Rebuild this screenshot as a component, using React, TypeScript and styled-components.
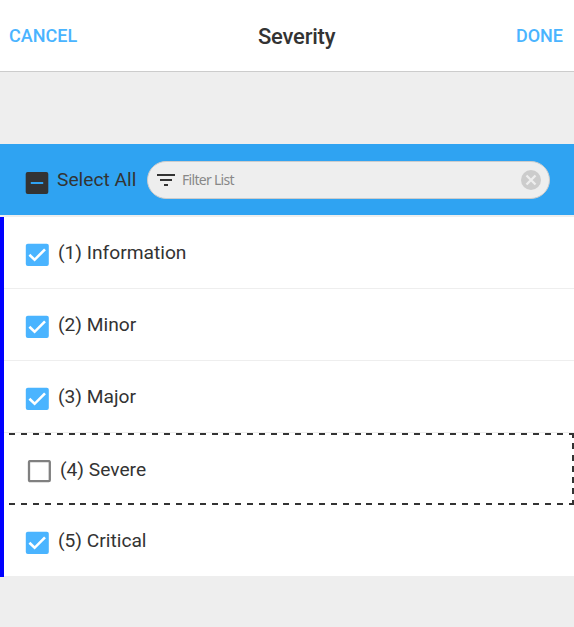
import React from "react";
import styled, { createGlobalStyle } from "styled-components";

const GlobalStyle = createGlobalStyle`
  * { box-sizing: border-box; }
  body { margin: 0; background: #eeeeee; font-family: Roboto, "Liberation Sans", sans-serif; color: #333333; }
`;

const Page = styled.main`
  height: 627px;
  overflow: hidden;
`;

const TopBar = styled.header`
  display: grid;
  grid-template-columns: 249px 1fr auto;
  align-items: center;
  height: 72px;
  padding: 0 11px 0 9px;
  background: #ffffff;
  border-bottom: 1px solid #cccccc;
`;

const TextButton = styled.button`
  justify-self: start;
  padding: 0;
  border: 0;
  background: none;
  color: #4ab4ff;
  font: 500 18px/24px Roboto, sans-serif;
`;

const Title = styled.h1`
  margin: 0;
  padding-top: 2px;
  font-size: 22px;
  line-height: 28px;
  font-weight: 500;
  letter-spacing: -0.22px;
`;

const SelectBar = styled.section`
  display: flex;
  align-items: center;
  height: 71px;
  margin: 72px 0 2px;
  padding: 0 24px 0 25px;
  background: #2fa3f2;
`;

const Label = styled.span`
  font-size: 19.2px;
  line-height: 24px;
  white-space: nowrap;
`;

const SelectAll = styled.label`
  display: flex;
  gap: 8px;
  width: 122px;
  height: 31px;
  padding-top: 4px;
  svg { margin-top: 4px; flex: none; }
`;

const SearchField = styled.div`
  display: flex;
  align-items: center;
  flex: 1;
  height: 38px;
  padding: 0 8px 0 9px;
  border: 1px solid #cccccc;
  border-radius: 19px;
  background: #eeeeee;
`;

const SearchInput = styled.input`
  flex: 1;
  min-width: 0;
  margin-left: 7px;
  padding: 0;
  border: 0;
  outline: 0;
  background: transparent;
  font: 14px/20px "Noto Sans", sans-serif;
  letter-spacing: -0.7px;
  &::placeholder { color: #888888; opacity: 1; }
`;

const List = styled.ul`
  margin: 0;
  padding: 0;
  list-style: none;
  border-left: 4px solid #0000ff;
`;

const dashX = "repeating-linear-gradient(90deg, #333333 0 6px, transparent 6px 11.915px)";
const dashY = "repeating-linear-gradient(180deg, #333333 0 6px, transparent 6px 11.3px)";

const Row = styled.li<{ $focused: boolean }>`
  display: flex;
  gap: 9px;
  height: 72px;
  padding: ${(p) => (p.$focused ? "25px 0 0 23px" : "24px 0 0 21px")};
  background: ${(p) =>
    p.$focused
      ? `${dashX} 5px 0 / 565px 2px no-repeat, ${dashX} 5px 70px / 565px 2px no-repeat, ${dashY} right -1px / 2px 73px no-repeat, #ffffff`
      : "#ffffff"};
  border-bottom: ${(p) => (p.$focused ? "0" : "1px solid #eeeeee")};
  svg { margin-top: 2px; flex: none; }
`;

const CheckIcon = ({ state }: { state: "on" | "off" | "mixed" }) => (
  <svg width="24" height="24" viewBox="0 0 24 24" fill="none">
    {state === "on" && (
      <>
        <rect x="0.8" y="0.8" width="23" height="22.2" rx="2" fill="#4ab4ff" />
        <path d="M4.4 11.8 9.6 16.8 20 6.3" stroke="#ffffff" strokeWidth="2.6" />
      </>
    )}
    {state === "off" && (
      <rect x="2" y="1.1" width="20.8" height="20.1" rx="1" stroke="#808080" strokeWidth="2.3" />
    )}
    {state === "mixed" && (
      <>
        <rect x="0.7" y="0" width="22.6" height="22" rx="2" fill="#333333" />
        <path d="M5.8 11h12.4" stroke="#2fa3f2" strokeWidth="2" />
      </>
    )}
  </svg>
);

const FilterIcon = () => (
  <svg width="18" height="12" viewBox="0 0 18 12" fill="#333333">
    <path d="M0 0h18v2H0zM3 5h12v2H3zM7 10h4v2H7z" />
  </svg>
);

const ClearIcon = () => (
  <svg width="20" height="20" viewBox="0 0 20 20">
    <circle cx="10" cy="10" r="10" fill="#cccccc" />
    <path d="m5.5 5.5 9 9m0-9-9 9" stroke="#eeeeee" strokeWidth="2.3" />
  </svg>
);

const severities = [
  { label: "(1) Information", checked: true, focused: false },
  { label: "(2) Minor", checked: true, focused: false },
  { label: "(3) Major", checked: true, focused: false },
  { label: "(4) Severe", checked: false, focused: true },
  { label: "(5) Critical", checked: true, focused: false },
];

export default function App() {
  return (
    <Page>
      <GlobalStyle />
      <TopBar>
        <TextButton>CANCEL</TextButton>
        <Title>Severity</Title>
        <TextButton>DONE</TextButton>
      </TopBar>
      <SelectBar>
        <SelectAll>
          <CheckIcon state="mixed" />
          <Label>Select All</Label>
        </SelectAll>
        <SearchField>
          <FilterIcon />
          <SearchInput placeholder="Filter List" />
          <ClearIcon />
        </SearchField>
      </SelectBar>
      <List>
        {severities.map((s) => (
          <Row key={s.label} $focused={s.focused}>
            <CheckIcon state={s.checked ? "on" : "off"} />
            <Label>{s.label}</Label>
          </Row>
        ))}
      </List>
    </Page>
  );
}
